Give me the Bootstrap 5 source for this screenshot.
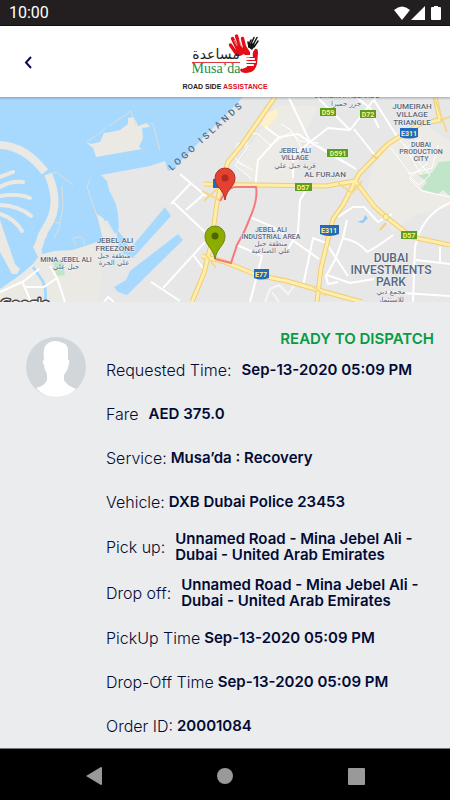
<!DOCTYPE html>
<html lang="en">
<head>
<meta charset="utf-8">
<meta name="viewport" content="width=device-width, initial-scale=1">
<title>Musa'da Road Side Assistance</title>
<link href="https://cdn.jsdelivr.net/npm/bootstrap@5.3.0/dist/css/bootstrap.min.css" rel="stylesheet">
<style>
body{font-family:Inter,"Liberation Sans",sans-serif;background:#ebecee;color:#020b35}
.status-bar{background:#231f20;height:26px;font:16px/26px Roboto,sans-serif;padding:0 8px 0 9px;border-bottom:1px solid #111}
.app-head{height:71px;display:grid;grid-template-columns:1fr auto 1fr;background:#fff}
.back-btn{width:56px;height:44px;color:#0b0b5c}
.map-view{height:205px;width:100%}
.map-view text{font-family:Roboto,"DejaVu Sans",sans-serif;font-weight:500;text-anchor:middle;fill:#56677f;stroke:#f4f4f4;stroke-width:1px;paint-order:stroke;stroke-linejoin:round}
.map-view .ar{font-family:"DejaVu Sans",sans-serif;font-weight:400}
.map-view .shield{fill:#fff380;stroke:none;font-weight:700;font-size:7px}
.map-view .water-label{text-anchor:start;letter-spacing:3px;stroke:none}
.map-view .map-brand{font-family:"Open Sans",sans-serif;fill:#fff;stroke:#444;stroke-width:3px}
.order-panel{padding:28px 16px 0 26px}
.avatar{width:60px;height:60px;margin-top:7px}
.state-text{color:#079a45;font-size:15px;line-height:18px;font-weight:600}
.order-row{min-height:44px}
.order-row dt{font-weight:300;font-size:16px;line-height:20px;white-space:nowrap}
.order-row dd{font-weight:600;font-size:15px;line-height:16px}
.order-row.address{min-height:46px}
.wide-gap{gap:10px}
.sys-nav{background:#000;height:52px;padding:0 72px;border-top:1px solid #777}
.sys-nav .btn{width:44px;height:44px}
</style>
<script src="https://cdn.jsdelivr.net/npm/bootstrap@5.3.0/dist/js/bootstrap.bundle.min.js"></script>
</head>
<body class="d-flex flex-column min-vh-100">
<div class="status-bar text-white d-flex justify-content-between align-items-center">
<span>10:00</span>
<svg width="50" height="16" viewBox="0 0 50 16" fill="#fff" aria-hidden="true"><path d="M2 5Q10-2 18 5L10 15Z"/><path d="M33 1V15H19Z"/><path d="M42 1h4v1h2q1 0 1 1v11q0 1-1 1h-8q-1 0-1-1V3q0-1 1-1h2Z"/></svg>
</div>
<header class="app-head align-items-center">
<button class="back-btn btn border-0 p-0" type="button" aria-label="Back"><svg width="12" height="14" viewBox="0 0 12 14"><path d="M9 1L4 6.5L9 12" fill="none" stroke="currentColor" stroke-width="2"/></svg></button>
<svg width="90" height="62" viewBox="180 31 90 62" role="img" aria-label="Musa'da Road Side Assistance">
<path d="M249 44L251 40M251 44L254 37.500M253 45L257 37.500M254 47L258 41M249 47L248 42" stroke="#151515" stroke-width="1.500" stroke-linecap="round"/>
<path d="M248 44L254 43L255 46L252 50L248 47Z" fill="#151515"/>
<g stroke="#e30d17" stroke-linecap="round" fill="none" stroke-width="3.400"><path d="M236 53L230.500 45M238 50L232.500 38.500M241 50L236.500 36M245 49L242.500 38.500"/></g>
<path d="M234 51L246 46Q248 49 250 52V56H236Z" fill="#e30d17"/>
<path d="M237 46L234 40M241 46L239 39" stroke="#fff" stroke-width=".5"/>
<path d="M253 57Q252 52 255 49Q258 48 258 53L257 64Q255 73 246 73Q241 73 240 70L243 66L250 57Z" fill="#e30d17"/>
<path d="M238 57L244 54L247 59V67L242 69L239 66Z" fill="#fff"/><g stroke="#fff" stroke-width="2.200" stroke-linecap="round"><path d="M243 56H250M243 59H254M243 62H255M243 65H253"/></g>
<path d="M246 57.600H251M246 60.500H254M246 63.500H254" stroke="#e30d17" stroke-width=".5"/>
<text x="216" y="59" text-anchor="middle" font-family="DejaVu Sans,sans-serif" font-size="14" fill="#222">مساعدة</text>
<path d="M192 62.500H240" stroke="#df3840"/>
<text x="216" y="73" text-anchor="middle" font-family="Liberation Serif,serif" font-size="14" fill="#268b43">Musa’da</text>
<text x="225" y="89" text-anchor="middle" font-family="Liberation Sans,sans-serif" font-weight="700" font-size="7" fill="#222">ROAD SIDE <tspan fill="#e30d17">ASSISTANCE</tspan></text>
</svg>
</header>
<svg class="map-view d-block" viewBox="0 97 450 205" preserveAspectRatio="xMidYMid slice" role="img" aria-label="Trip map">
<rect y="97" width="450" height="205" fill="#a7d9ff"/>
<!-- coastline and harbour -->
<path fill="#e7e7e7" d="M243 97H450V302H90L98 241L109 237L104 222L107 220L115 234L119 228L118 214L116 204L113 198L109 190L107 181L101 175L150 166L165 161L168 171L172 170L179 163L205 136L225 116Z"/>
<path fill="#ebe9e4" d="M0 289L20 275L33 264L38 257L33 247L38 238L47 226L47 236L41 244L42 254L55 251L73 250L100 241L102 270L98 302H0ZM0 220L15 264L20 269L17 274L12 274L0 252ZM86 142L93 148L96 157L142 149L139 147L143 138L142 128L150 127L147 123L138 126L134 117L128 118V124L120 130L111 132L104 133L100 142L91 144Z"/>
<path d="M0 145Q25 146 45 172" fill="none" stroke="#ebe9e4" stroke-width="8"/><path d="M48 174Q60 201 50 221L42 235L38 248" fill="none" stroke="#ebe9e4" stroke-width="8"/>
<path d="M0 177L13 172M0 187Q10 181 23 182M0 196Q18 193 30 198M0 205Q20 206 31 216M0 214Q15 219 22 231" fill="none" stroke="#ebe9e4" stroke-width="4" stroke-linecap="round"/>
<path d="M49 175L56 172L73 185M62 186L63 207L59 228L54 238M90 179L87 187L97 216L107 236M87 142L106 128M109 126L131 111L136 126M77 245Q69 238 77 237Q85 236 84 245M54 222L60 223M150 123L153 124L160 151" fill="none" stroke="#deded8"/>
<path d="M97 214L103 218L112 236L103 240Z" fill="#ebe9e4"/>
<path fill="#a7d9ff" d="M116 228L123 237L130 249L165 207L171 216L150 239L133 258L124 255L118 244ZM114 287L126 280L130 271L178 234L183 240L127 295L118 292Z"/>
<path d="M33 267L42 280Q47 288 45 302" fill="none" stroke="#a7d9ff" stroke-width="3"/>
<!-- parks and residential ground -->
<path fill="#edebe6" d="M238 165L276 105L318 106L302 142L293 184L251 181ZM397 132L424 124L450 141V207L415 215L393 232L366 196L372 168Z"/>
<path fill="#c0e5c8" d="M52 257L63 261L65 275L57 276L54 267ZM418 175L432 173L439 162L450 161V196L443 190L438 194L421 189L427 182Z"/>
<path fill="#fff2ca" d="M267 113L277 109V117L267 128L261 125Z"/>
<g fill="none" stroke="#fff" stroke-width="2" stroke-linejoin="round">
<path d="M244 166L233 156L238 143L246 146L249 133L258 134L270 145L291 132L300 141L318 143L303 150L291 130L281 124M249 145L235 165L252 179M237 162L253 170" stroke-width="1"/>
<path d="M265 127L279 137L298 134L310 142M256 184V178L258 160L279 137"/>
<path d="M318 98L350 130L376 97M289 98L310 142L293 156V178M310 142L328 128L350 130M356 97L370 108L377 124L379 128M374 100L398 138M318 146L356 169M354 129L377 158M310 142L345 163"/>
<path d="M398 138L430 175L419 185L410 177L428 163M399 152L421 139M391 148L411 175M404 144L421 175M408 174L432 168L438 145M409 178L422 191L450 197" stroke-width="1"/>
<path d="M180 174L206 196M171 204L190 184M172 201L206 233M186 210L204 194M163 288L205 242M151 282L180 301M194 256L206 272M250 217L273 227L291 239L319 259M237 245L262 256L250 302M287 251L298 232L300 200L310 184M303 286L313 238L326 243L340 264L348 276"/>
<path d="M338 217L353 207H364L378 222L392 214M347 220L343 238L335 260L326 276L328 284L338 282M342 238Q359 241 367 252Q379 246 393 235M327 275L350 283L374 279M355 267L372 274M440 247V264M416 260L450 264M386 292L450 296M450 203Q422 214 415 247L413 302"/>
<path d="M0 292L24 281L39 269M22 281L31 302M25 287H44L57 278L50 266M57 278L65 302M104 302L108 297L114 302"/>
</g>
<path d="M265 302L270 289L279 285L289 295M272 292L279 302M288 294L294 286" fill="none" stroke="#f5f5f5" stroke-width="2"/>
<!-- motorways -->
<g fill="none" stroke-linejoin="round"><g stroke="#efcd74" stroke-width="5"><path id="road-a" d="M275 97L241 146L228 162L222 181L217 203L211 245L204 273L192 302"/><path id="road-b" d="M435 97L440 120L420 124L388 144L359 174L343 205L333 219L321 268L317 302"/><path id="road-c" d="M204 184L247 185L326 186L355 181L375 207L386 217L412 237L450 245"/><path id="road-d" d="M202 256L225 262L257 275L287 281L329 293L362 302"/></g>
<g stroke="#ffedaa" stroke-width="3"><use href="#road-a"/><use href="#road-b"/><use href="#road-c"/><use href="#road-d"/><path d="M434 97L447 132M440 120L450 117M202 191L221 201M204 201L222 184M338 183L352 193L362 181M205 254L216 268M312 286L326 296" stroke="#f5d98b" stroke-width="2"/></g></g>
<path d="M386 223l-6 7M372 155l6 4" fill="none" stroke="#f0d17c" stroke-width="2"/><circle cx="386" cy="217" r="3" fill="#ffedaa" stroke="#efcd74"/>
<path d="M357 222l6-2 2-5 3 3-5 5Z" fill="#8dccfa"/>
<path d="M220 201L225 193Q229 187 237 187L256 187Q258 197 252 213L245 230L237 245L231 263L215 259" fill="none" stroke="#f47a80" stroke-width="2"/>
<g font-size="7">
<text x="347" y="98">JUMEIRAH ISLANDS</text><text class="ar" x="346" y="106">جزر جميرا</text>
<text x="412" y="109" font-size="8">JUMEIRAH</text><text x="412" y="117" font-size="8">VILLAGE</text><text x="412" y="125" font-size="8">TRIANGLE</text>
<text x="421" y="147">DUBAI</text><text x="421" y="154">PRODUCTION</text><text x="421" y="161">CITY</text>
<text x="295" y="153">JEBEL ALI</text><text x="295" y="160">VILLAGE</text><text class="ar" x="295" y="168">قرية جبل علي</text>
<text x="325" y="177" font-size="8">AL FURJAN</text>
<text x="271" y="232">JEBEL ALI</text><text x="271" y="239">INDUSTRIAL AREA</text><text class="ar" x="271" y="246">منطقة جبل</text><text class="ar" x="271" y="253">علي الصناعية</text>
<text x="115" y="243" font-size="8">JEBEL ALI</text><text x="115" y="251" font-size="8">FREEZONE</text><text class="ar" x="114" y="258">منطقة جبل</text><text class="ar" x="114" y="265">علي الحرة</text>
<text x="66" y="262">MINA JEBEL ALI</text><text class="ar" x="66" y="269">جبل علي</text>
<g font-size="12"><text x="391" y="262">DUBAI</text><text x="391" y="274">INVESTMENTS</text><text x="391" y="286">PARK</text></g>
<text class="ar" x="391" y="294">مجمع دبي</text><text class="ar" x="391" y="302">للاستثمار</text>
</g>
<path id="island-label" d="M172 171L262 89" fill="none"/>
<text class="water-label" font-size="9"><textPath href="#island-label">LOGO ISLANDS</textPath></text>
<g fill="#5c9d21"><rect x="320" y="108" width="16" height="8"/><rect x="360" y="110" width="16" height="8"/><rect x="327" y="149" width="21" height="8"/><rect x="295" y="183" width="17" height="8"/><rect x="401" y="231" width="16" height="8"/></g>
<g fill="#206bc0"><path d="M400 128H418V137Q409 140 400 137ZM320 225H339V234Q329 238 320 234ZM254 269H269V278Q261 281 254 278ZM213 179H227V188H213Z"/></g>
<text class="shield" x="328" y="115">D59</text><text class="shield" x="368" y="117">D72</text><text class="shield" x="338" y="156">D591</text><text class="shield" x="303" y="190">D57</text><text class="shield" x="409" y="238">D57</text><text class="shield" x="409" y="136">E311</text><text class="shield" x="329" y="233">E311</text><text class="shield" x="261" y="277">E77</text>
<path d="M225 200C223 188 215 187 215 178A10 10 0 0 1 235 178C235 187 227 188 225 200Z" fill="#e34132" stroke="#b52f26"/><circle cx="225" cy="178" r="3.500" fill="#b12a1e"/>
<path d="M215 259C213 247 205 246 205 236A10 10 0 0 1 225 236C225 246 217 247 215 259Z" fill="#8cad00" stroke="#6b870e"/><circle cx="215" cy="236" r="3.500" fill="#4f6500"/>
<text class="map-brand" x="25" y="309" font-size="15">Google</text>
<defs><linearGradient id="top-shade" x2="0" y2="1"><stop stop-color="#456" stop-opacity=".35"/><stop offset="1" stop-color="#456" stop-opacity="0"/></linearGradient></defs><rect y="97" width="450" height="3" fill="url(#top-shade)"/>
</svg>
<main class="order-panel flex-grow-1 d-flex align-items-start">
<svg class="avatar flex-shrink-0 me-3" viewBox="0 0 60 60" role="img" aria-label="Customer"><circle cx="30" cy="30" r="30" fill="#d1d6da"/><path d="M10 51Q20 48 21 43V37Q18 32 18 28L17 26Q16 23 18 23Q16 10 22 6Q29 2 37 6Q42 7 42 14V23Q44 23 43 27Q42 33 38 38V43Q40 48 50 52Q42 60 30 60Q18 60 10 51Z" fill="#fff"/></svg>
<div class="flex-grow-1 ps-1">
<div class="state-text text-end">READY TO DISPATCH</div>
<dl class="mb-0">
<div class="order-row d-flex align-items-center wide-gap"><dt>Requested Time:</dt><dd class="mb-0">Sep-13-2020 05:09 PM</dd></div>
<div class="order-row d-flex align-items-center wide-gap"><dt>Fare</dt><dd class="mb-0">AED 375.0</dd></div>
<div class="order-row d-flex align-items-center gap-1"><dt>Service:</dt><dd class="mb-0">Musa’da : Recovery</dd></div>
<div class="order-row d-flex align-items-center gap-1"><dt>Vehicle:</dt><dd class="mb-0">DXB Dubai Police 23453</dd></div>
<div class="order-row address d-flex align-items-center wide-gap"><dt>Pick up:</dt><dd class="mb-0">Unnamed Road - Mina Jebel Ali - Dubai - United Arab Emirates</dd></div>
<div class="order-row address d-flex align-items-center wide-gap"><dt>Drop off:</dt><dd class="mb-0">Unnamed Road - Mina Jebel Ali - Dubai - United Arab Emirates</dd></div>
<div class="order-row d-flex align-items-center gap-1"><dt>PickUp Time</dt><dd class="mb-0">Sep-13-2020 05:09 PM</dd></div>
<div class="order-row d-flex align-items-center gap-1"><dt>Drop-Off Time</dt><dd class="mb-0">Sep-13-2020 05:09 PM</dd></div>
<div class="order-row d-flex align-items-center gap-1"><dt>Order ID:</dt><dd class="mb-0">20001084</dd></div>
</dl>
</div>
</main>
<nav class="sys-nav d-flex justify-content-between align-items-center" aria-label="System navigation">
<button class="btn border-0 p-0" type="button" aria-label="Back"><svg width="18" height="20" viewBox="0 0 18 20"><path d="M1 10L16 1Q17 1 17 2V18Q17 19 16 19Z" fill="#999"/></svg></button>
<button class="btn border-0 p-0" type="button" aria-label="Home"><svg width="16" height="16"><circle cx="8" cy="8" r="8" fill="#999"/></svg></button>
<button class="btn border-0 p-0" type="button" aria-label="Recent apps"><svg width="17" height="17"><rect width="17" height="17" rx="1" fill="#999"/></svg></button>
</nav>
</body>
</html>
